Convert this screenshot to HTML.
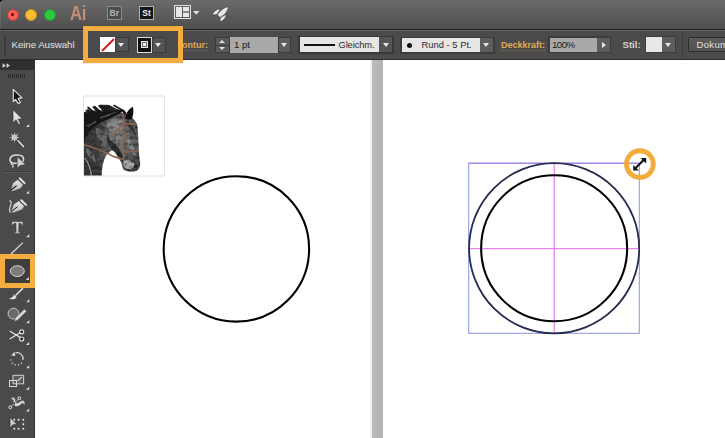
<!DOCTYPE html>
<html><head><meta charset="utf-8">
<style>
*{margin:0;padding:0;box-sizing:border-box}
html,body{width:725px;height:438px;overflow:hidden;background:#fff;font-family:"Liberation Sans",sans-serif}
.a{position:absolute}
#title{left:0;top:0;width:725px;height:30px;background:linear-gradient(#6a6a6a,#4f4f4f);border-bottom:1px solid #1e1e1e}
#ctrl{left:0;top:30px;width:725px;height:30px;background:#4b4b4b;border-top:1px solid #666;border-bottom:1.5px solid #2e2e2e}
.txt{font-size:10px;color:#dcdcdc;white-space:nowrap;line-height:12px}
.org{color:#e0a955}
.inp{background:#a9a9a9;color:#1a1a1a}
.dd{background:#5d5d5d;border:1px solid #3a3a3a}
.tri{width:0;height:0;border-left:3.5px solid transparent;border-right:3.5px solid transparent;border-top:4px solid #e8e8e8}
#tools{left:0;top:70px;width:35px;height:368px;background:#4a4a4a;border-right:1px solid #2e2e2e}
#phead{left:0;top:60px;width:35px;height:10.5px;background:#303030;border-top:1px solid #262626}
.corner{width:0;height:0;border-left:3px solid transparent;border-bottom:3px solid #e0e0e0}
</style></head><body>
<!-- title bar -->
<div id="title" class="a"></div>
<svg class="a" style="left:0;top:0" width="6" height="6"><path d="M0 0 L3 0 C1.5 0.3 0.3 1.5 0 3 Z" fill="#000"/></svg>
<div class="a" style="left:0;top:2px;width:1px;height:27px;background:rgba(255,255,255,0.08)"></div>
<div class="a" style="left:6.5px;top:8.5px;width:12px;height:12px;border-radius:50%;background:#f95e57;border:0.7px solid #b8413b"></div>
<div class="a" style="left:11px;top:13px;width:3px;height:3px;border-radius:50%;background:#5a0a06"></div>
<div class="a" style="left:25px;top:8.5px;width:12px;height:12px;border-radius:50%;background:#fbbd2f;border:0.7px solid #c8961e"></div>
<div class="a" style="left:43.5px;top:8.5px;width:12px;height:12px;border-radius:50%;background:#2ec842;border:0.7px solid #1f9a30"></div>
<div class="a" style="left:69.5px;top:1.8px;font-size:20px;line-height:22px;color:#c48e72;font-weight:bold;letter-spacing:-0.6px;transform:scaleX(0.84);transform-origin:0 0">Ai</div>
<div class="a" style="left:107px;top:6px;width:14.5px;height:14px;border:1px solid #8a8a8a;background:#4c4c4c;color:#b4b4b4;font-size:8.5px;line-height:12px;text-align:center;font-weight:bold">Br</div>
<div class="a" style="left:139px;top:6px;width:15px;height:14px;border:1px solid #b0b0b0;background:#151515;color:#f0f0f0;font-size:8.5px;line-height:12px;text-align:center;font-weight:bold">St</div>
<svg class="a" style="left:172px;top:4px" width="30" height="17">
  <rect x="2.5" y="1.5" width="16" height="13" fill="none" stroke="#e0e0e0" stroke-width="1"/>
  <rect x="4" y="3" width="6" height="10" fill="#e8e8e8"/>
  <rect x="11" y="3" width="6" height="4.3" fill="#e8e8e8"/>
  <rect x="11" y="8.7" width="6" height="4.3" fill="#e8e8e8"/>
  <path d="M21 7 L27.5 7 L24.25 10.8 Z" fill="#e0e0e0"/>
</svg>
<svg class="a" style="left:0;top:0" width="240" height="28">
  <path d="M228.6 6.8 C224.5 7.2 220 10.4 217.3 14.8 L220.1 17.6 C224.2 15.4 227.6 11.6 228.6 6.8 Z" fill="#e6e6e6" stroke="#2a2a2a" stroke-width="0.5"/>
  <path d="M212.4 14.8 C213.2 11.8 215.8 9.4 219.9 8.7 C219.4 11.4 217.8 13.6 216.3 14.6 C215 15 213.6 15 212.4 14.8 Z" fill="#e6e6e6" stroke="#2a2a2a" stroke-width="0.5"/>
  <path d="M220 21.7 C219.8 19.8 220.2 18.2 221 17.4 C222.4 16.2 224.4 15.1 226.3 14.8 C225.9 17.8 223.6 20.6 220 21.7 Z" fill="#e6e6e6" stroke="#2a2a2a" stroke-width="0.5"/>
</svg>

<!-- control bar -->
<div id="ctrl" class="a"></div>
<div class="a" style="left:4px;top:35px;width:2px;height:21px;background:repeating-linear-gradient(#2e2e2e 0 1px,transparent 1px 2px)"></div>
<div class="a txt" style="left:11.5px;top:38.5px;font-size:9.8px;letter-spacing:-0.1px;color:#e2e2e2">Keine Auswahl</div>

<div class="a txt org" style="left:175.5px;top:40.3px;border-bottom:1px dotted #7d6a50;line-height:10px;font-size:9px;font-weight:bold">Kontur:</div>
<!-- highlight box -->
<div class="a" style="left:83px;top:26px;width:100px;height:37px;background:#4a4a4a"></div>
<div class="a" style="left:82.5px;top:26px;width:100.3px;height:37.2px;border:5.3px solid #f4ad3e;z-index:3;box-shadow:0 0 0.8px rgba(0,0,0,0.5)"></div>
<div class="a" style="left:100px;top:36.5px;width:15px;height:15.5px;background:#fff;overflow:hidden">
  <svg width="16" height="16"><line x1="2" y1="14" x2="14" y2="2" stroke="#d81818" stroke-width="2"/></svg>
</div>
<div class="a dd" style="left:115px;top:36.5px;width:13.6px;height:15.5px;background:#535353"></div>
<div class="a tri" style="left:118.3px;top:43px"></div>
<div class="a" style="left:137px;top:37px;width:15px;height:15.5px;background:#111;border:1px solid #ddd"></div>
<div class="a" style="left:141px;top:41px;width:7px;height:7px;border:1px solid #e8e8e8;background:#666"></div>
<div class="a" style="left:143px;top:43px;width:3px;height:3px;background:#f0f0f0"></div>
<div class="a dd" style="left:152px;top:37px;width:13.5px;height:15.5px;background:#535353"></div>
<div class="a tri" style="left:155.3px;top:43px"></div>

<div class="a" style="left:215px;top:37px;width:14.5px;height:15.5px;background:#5a5a5a;border:1px solid #3a3a3a"></div>
<div class="a" style="left:216px;top:44.5px;width:12.5px;height:1px;background:#3a3a3a"></div>
<div class="a" style="left:219px;top:39.5px;width:0;height:0;border-left:3px solid transparent;border-right:3px solid transparent;border-bottom:3.5px solid #e0e0e0"></div>
<div class="a" style="left:219px;top:47px;width:0;height:0;border-left:3px solid transparent;border-right:3px solid transparent;border-top:3.5px solid #e0e0e0"></div>
<div class="a inp txt" style="left:229.5px;top:37px;width:48px;height:15.5px;padding:2.2px 0 0 4.5px;font-size:9.6px">1 pt</div>
<div class="a dd" style="left:277.5px;top:37px;width:13px;height:15.5px"></div>
<div class="a tri" style="left:280.5px;top:43px"></div>

<div class="a" style="left:297.5px;top:36px;width:96.5px;height:17.5px;background:#383838"></div>
<div class="a" style="left:299.5px;top:37.3px;width:79.7px;height:14.7px;background:#e6e6e6"></div>
<div class="a" style="left:304px;top:43.5px;width:31px;height:2px;background:#111"></div>
<div class="a txt" style="left:338.5px;top:38.5px;color:#2a2a2a;font-size:9.3px;letter-spacing:-0.1px">Gleichm.</div>
<div class="a" style="left:379.2px;top:37.3px;width:13.2px;height:14.7px;background:#555"></div>
<div class="a tri" style="left:382.5px;top:43px"></div>

<div class="a" style="left:399.5px;top:36.5px;width:95px;height:17px;background:#3c3c3c"></div>
<div class="a" style="left:401.5px;top:38px;width:78px;height:14px;background:#e6e6e6"></div>
<div class="a" style="left:406.5px;top:42.5px;width:5px;height:5px;border-radius:50%;background:#111"></div>
<div class="a txt" style="left:421.5px;top:38.5px;color:#2a2a2a;font-size:9.3px;letter-spacing:0.05px">Rund - 5 Pt.</div>
<div class="a" style="left:479.5px;top:38px;width:13.5px;height:14px;background:#5d5d5d"></div>
<div class="a tri" style="left:482.5px;top:43px"></div>

<div class="a txt org" style="left:501px;top:40.2px;border-bottom:1px dotted #7d6a50;line-height:10px;font-size:9px;font-weight:bold">Deckkraft:</div>
<div class="a" style="left:548px;top:36px;width:63px;height:17px;background:#3c3c3c"></div>
<div class="a inp txt" style="left:549.5px;top:37.5px;width:47px;height:14.5px;padding:1px 0 0 2.5px;font-size:9.8px;letter-spacing:-0.6px">100%</div>
<div class="a" style="left:596.5px;top:37.5px;width:13.5px;height:14.5px;background:#5d5d5d"></div>
<div class="a" style="left:601.5px;top:41.5px;width:0;height:0;border-top:3.5px solid transparent;border-bottom:3.5px solid transparent;border-left:4px solid #e8e8e8"></div>

<div class="a txt" style="left:622.5px;top:39.3px;font-weight:bold;font-size:9.6px;color:#d4d4d4">Stil:</div>
<div class="a" style="left:645px;top:36px;width:31px;height:17px;background:#3c3c3c"></div>
<div class="a" style="left:646px;top:37px;width:15.5px;height:15px;background:#e8e8e8"></div>
<div class="a" style="left:661.5px;top:37px;width:13.5px;height:15px;background:#5d5d5d"></div>
<div class="a tri" style="left:664.5px;top:43px"></div>
<div class="a" style="left:681.5px;top:31px;width:1px;height:27px;background:#3a3a3a"></div>
<div class="a" style="left:688px;top:37px;width:50px;height:14.5px;background:linear-gradient(#5c5c5c,#525252);border:1px solid #2c2c2c;border-radius:1.5px"></div>
<div class="a txt" style="left:696.5px;top:39px;font-size:9.6px;letter-spacing:0.3px;color:#e0e0e0">Dokum</div>

<!-- canvas -->
<div class="a" style="left:35px;top:60px;width:690px;height:378px;background:#fff"></div>
<div class="a" style="left:369.5px;top:60px;width:2.5px;height:378px;background:#f3f3f3"></div>
<div class="a" style="left:372px;top:60px;width:11px;height:378px;background:linear-gradient(90deg,#bcbcbc,#b2b2b2)"></div>

<!-- canvas art -->
<svg class="a" style="left:0;top:0" width="725" height="438">
  <rect x="83.5" y="96" width="81" height="80" fill="#fff" stroke="#e2e2e2" stroke-width="1"/>
  <defs>
    <radialGradient id="hg" cx="0.62" cy="0.42" r="0.7"><stop offset="0" stop-color="#828282"/><stop offset="0.5" stop-color="#5a5a5a"/><stop offset="1" stop-color="#363636"/></radialGradient>
    <clipPath id="hc"><rect x="84" y="96.5" width="80" height="79"/></clipPath>
    <filter id="tex" x="0" y="0" width="1" height="1">
      <feTurbulence type="fractalNoise" baseFrequency="0.3" numOctaves="2" seed="11" result="n"/>
      <feColorMatrix in="n" type="matrix" values="0 0 0 0 0  0 0 0 0 0  0 0 0 0 0  2.0 0 0 0 -0.8" result="na"/>
      <feComposite in="na" in2="SourceGraphic" operator="in" result="m"/>
      <feFlood flood-color="#1a1a1a"/>
      <feComposite in2="m" operator="in" result="dk"/>
      <feMerge><feMergeNode in="SourceGraphic"/><feMergeNode in="dk"/></feMerge>
    </filter>
  </defs>
  <g clip-path="url(#hc)">
    <g filter="url(#tex)">
    <!-- head + neck silhouette -->
    <path d="M84 112 C92 110 104 110 114 111 C120 112 126 114 131 117 C134 119 136.6 122 137.4 126 C138.2 134 138.6 150 139.6 160 C140.6 164 140.4 168 137 170.6 C133 172.4 127 171.6 123.6 169.4 C121.8 166 121.8 162.4 120.2 160.4 C117 156 115 152 113 150 C108 152 105.5 156 104 160 C102.4 165 101.8 170 101.6 176 L84 176 Z" fill="url(#hg)"/>
    <!-- darker neck shade -->
    <path d="M84 122 C92 120 100 122 106 128 C104 136 101 144 99 152 C97 160 96 168 95 176 L84 176 Z" fill="#3c3c3c" opacity="0.75"/>
    <path d="M107 138 C113 142 118 146 121 152 C123 156 124 160 124 164 C120 158 116 152 112 150 C109 146 107 142 107 138 Z" fill="#262626" opacity="0.85"/>
    <path d="M126 120 C131 123 135 128 136 136 C133 133 129 128 126.5 124 Z" fill="#2e2e2e" opacity="0.8"/>
    <!-- light mottled patches -->
    <path d="M108 121 C114 118 120 118 123.5 122 C123 130 119 134 112 134 C108 131 106 126 108 121 Z" fill="#a2a2a2" opacity="0.6"/>
    <path d="M96 128 C102 128 106 134 104 142 C99 141 95 135 96 128 Z" fill="#8a8a8a" opacity="0.5"/>
    <path d="M127 138 C131 140 135 146 136 156 C132 154 128 148 127 138 Z" fill="#a0a0a0" opacity="0.55"/>
    <path d="M86 148 C91 150 95 154 96 162 C92 160 88 156 86 152 Z" fill="#909090" opacity="0.6"/>
    <path d="M123 161 C128 159 133 161 135 165 C133 170 127 170 124 167 Z" fill="#bdbdbd" opacity="0.8"/>
    </g>
    <path d="M84.5 158 C88 162 90.5 168 91.5 176" stroke="#d8d8d8" stroke-width="1" fill="none" opacity="0.8"/>
    <circle cx="135.6" cy="166.2" r="1.6" fill="#1c1c1c"/>
    <circle cx="136.2" cy="127.4" r="1" fill="#111"/>
    <!-- mane -->
    <filter id="bl"><feGaussianBlur stdDeviation="0.5"/></filter>
    <g filter="url(#bl)">
    <path d="M84 114 L90 111 L100 112 L110 111 L118 109.5 L124 110.4 C119 114 111 118 104 121 C98 124 92 128 88 133 C86 136 85 140 84 142 Z" fill="#161616"/>
    <path d="M90.0 122.0 Q86.5 117.6 80.0 111.1" stroke="#151515" stroke-width="1.50" stroke-linecap="round" fill="none"/>
    <path d="M92.6 121.2 Q88.4 116.8 81.2 110.5" stroke="#151515" stroke-width="1.25" stroke-linecap="round" fill="none"/>
    <path d="M95.2 120.3 Q92.2 116.3 86.2 110.3" stroke="#151515" stroke-width="1.41" stroke-linecap="round" fill="none"/>
    <path d="M97.8 119.5 Q94.4 115.7 87.9 109.9" stroke="#151515" stroke-width="1.58" stroke-linecap="round" fill="none"/>
    <path d="M100.5 118.6 Q95.8 114.1 88.1 107.5" stroke="#151515" stroke-width="1.71" stroke-linecap="round" fill="none"/>
    <path d="M103.1 117.8 Q99.8 113.5 93.5 107.2" stroke="#151515" stroke-width="1.89" stroke-linecap="round" fill="none"/>
    <path d="M105.7 116.9 Q101.6 112.8 94.6 106.6" stroke="#151515" stroke-width="1.74" stroke-linecap="round" fill="none"/>
    <path d="M108.3 116.1 Q105.2 112.0 99.1 105.9" stroke="#151515" stroke-width="1.67" stroke-linecap="round" fill="none"/>
    <path d="M110.9 115.2 Q107.3 111.4 100.7 105.5" stroke="#151515" stroke-width="1.89" stroke-linecap="round" fill="none"/>
    <path d="M113.5 114.4 Q109.6 110.9 102.6 105.5" stroke="#151515" stroke-width="1.90" stroke-linecap="round" fill="none"/>
    <path d="M116.2 113.5 Q111.7 110.5 104.3 105.5" stroke="#151515" stroke-width="1.52" stroke-linecap="round" fill="none"/>
    <path d="M118.8 112.7 Q114.2 110.1 106.6 105.5" stroke="#151515" stroke-width="1.95" stroke-linecap="round" fill="none"/>
    <path d="M121.4 111.8 Q116.6 109.7 108.9 105.5" stroke="#151515" stroke-width="1.31" stroke-linecap="round" fill="none"/>
    <path d="M124.0 111.0 Q120.6 109.2 114.1 105.5" stroke="#151515" stroke-width="1.55" stroke-linecap="round" fill="none"/>
    <path d="M86.0 134.0 Q83.1 129.0 78.1 122.0" stroke="#1a1a1a" stroke-width="1.8" stroke-linecap="round" fill="none"/>
    <path d="M88.4 132.0 Q85.9 127.0 81.5 120.0" stroke="#1a1a1a" stroke-width="1.8" stroke-linecap="round" fill="none"/>
    <path d="M90.8 130.0 Q88.0 125.0 83.3 118.0" stroke="#1a1a1a" stroke-width="1.8" stroke-linecap="round" fill="none"/>
    <path d="M93.2 128.0 Q90.6 123.0 86.0 116.0" stroke="#1a1a1a" stroke-width="1.8" stroke-linecap="round" fill="none"/>
    <path d="M95.6 126.0 Q93.1 121.0 88.5 114.0" stroke="#1a1a1a" stroke-width="1.8" stroke-linecap="round" fill="none"/>
    <path d="M98.0 124.0 Q95.1 119.0 90.2 112.0" stroke="#1a1a1a" stroke-width="1.8" stroke-linecap="round" fill="none"/>
    <g stroke="#8a8a8a" stroke-width="0.6" fill="none" opacity="0.8">
      <path d="M88 127 L96 121"/>
      <path d="M100 118 L110 114.6"/>
      <path d="M106 116 L116 112"/>
    </g>
    </g>
    <g stroke="#6a6a6a" stroke-width="0.7" fill="none">
      <path d="M86 126 L96 122"/>
      <path d="M100 118 L110 114.6"/>
    </g>
    <!-- forelock + ear -->
    <path d="M119 108.6 C122 108.8 125 110.4 126.6 113 L124.6 116 C123.4 113 121.4 110.6 119 108.6 Z" fill="#1a1a1a"/>
    <path d="M125.2 119 C125.4 114 128.4 109 132.8 106.8 C133.8 110.4 133.6 115 131.6 119.6 Z" fill="#0e0e0e"/>
    <!-- bridle -->
    <g stroke="#8a6450" stroke-width="1.7" fill="none">
      <path d="M123.6 114.4 C123.6 128 123.6 146 123.4 159.6"/>
      <path d="M123.4 123.9 C127 123.9 131 123.9 135.3 123.9"/>
      <path d="M111.5 136 L123.4 123.9"/>
      <path d="M124.2 152.6 C129 151.4 134 150.8 139 151"/>
      <path d="M84 144.7 C96 148 106 152.4 113 156.2 L123.4 159.6"/>
    </g>
  </g>
  </g>
  </g>
  <circle cx="236.4" cy="248.9" r="72.7" fill="none" stroke="#000" stroke-width="2.1"/>
  <rect x="468.7" y="163.2" width="170.6" height="170.1" fill="none" stroke="#8597e0" stroke-width="1"/>
  <line x1="468.7" y1="163.2" x2="639.3" y2="163.2" stroke="#a878e4" stroke-width="1"/>
  <line x1="469" y1="248.7" x2="639" y2="248.7" stroke="#e466e6" stroke-width="1"/>
  <line x1="554.2" y1="163.2" x2="554.2" y2="333.3" stroke="#e066e6" stroke-width="1"/>
  <circle cx="554.15" cy="248.25" r="73" fill="none" stroke="#000" stroke-width="2.1"/>
  <circle cx="554.15" cy="248.25" r="85.05" fill="none" stroke="#1a1f3e" stroke-width="1.75"/>
  <circle cx="554.15" cy="248.25" r="85.05" fill="none" stroke="#6a80d0" stroke-width="0.5" opacity="0.4"/>
  <circle cx="639.9" cy="164.1" r="13.4" fill="none" stroke="#f4ab3c" stroke-width="4.9"/>
  <line x1="635.4" y1="168.2" x2="643.9" y2="159.7" stroke="#111" stroke-width="2"/>
  <path d="M633.2 165 L633.2 170.6 L638.8 170.6 Z" fill="#111"/>
  <path d="M640.6 157.9 L646.2 157.9 L646.2 163.5 Z" fill="#111"/>
</svg>
<!-- tools -->
<div id="phead" class="a"></div>
<svg class="a" style="left:0;top:60px" width="14" height="11"><path d="M2.6 3.2 L5.8 5.6 L2.6 8 Z M6.6 3.2 L9.8 5.6 L6.6 8 Z" fill="#d8d8d8"/></svg>
<div id="tools" class="a"></div>
<div class="a" style="left:8px;top:74px;width:17px;height:3.5px;background:repeating-linear-gradient(90deg,#2a2a2a 0 1px,transparent 1px 2px)"></div>

<!-- ellipse highlight -->
<div class="a" style="left:0;top:254px;width:35px;height:34px;border:5px solid #f4ad3e;background:#3e3e3e"></div>
<svg class="a" style="left:0;top:0" width="36" height="438">
  <defs>
    <linearGradient id="lg" x1="0" y1="0" x2="0" y2="1"><stop offset="0" stop-color="#e4e4e4"/><stop offset="1" stop-color="#b8b8b8"/></linearGradient>
    <linearGradient id="lg2" x1="0" y1="0" x2="1" y2="1"><stop offset="0" stop-color="#f0f0f0"/><stop offset="1" stop-color="#c4c4c4"/></linearGradient>
  </defs>
  <!-- separator -->
  <line x1="3" y1="171.5" x2="32" y2="171.5" stroke="#3c3c3c" stroke-width="1"/>
  <line x1="3" y1="172.5" x2="32" y2="172.5" stroke="#585858" stroke-width="1"/>
  <!-- selection -->
  <path d="M13.3 89.3 L13.3 101.6 L15.6 99.4 L18.3 103.6 L20.4 102.4 L18.2 98.4 L22 97.9 Z" fill="#151515" stroke="#e6e6e6" stroke-width="1.1" stroke-linejoin="round"/>
  <!-- direct selection -->
  <path d="M13.1 110.1 L13.1 122.4 L16.1 119.8 L18.6 124.6 L20.5 123.7 L18.1 119.1 L22.4 118.9 Z" fill="url(#lg2)" stroke="#222" stroke-width="0.45"/>
  <!-- magic wand -->
  <path d="M14.50 131.50 L15.49 135.00 L18.67 133.23 L16.90 136.41 L20.40 137.40 L16.90 138.39 L18.67 141.57 L15.49 139.80 L14.50 143.30 L13.51 139.80 L10.33 141.57 L12.10 138.39 L8.60 137.40 L12.10 136.41 L10.33 133.23 L13.51 135.00 Z" fill="#d6d6d6" stroke="#2a2a2a" stroke-width="0.35"/><circle cx="14.5" cy="137.4" r="2.4" fill="#c8c8c8"/>
  <line x1="18" y1="140.6" x2="23.6" y2="146.6" stroke="#1e1e1e" stroke-width="2.6" stroke-linecap="round"/><line x1="18" y1="140.6" x2="23.6" y2="146.6" stroke="#dedede" stroke-width="1.6" stroke-linecap="round"/>
  <!-- lasso -->
  <path d="M17.5 163.2 C13 163.8 9.6 162.6 10 159.3 C10.4 156 14 154.8 17.5 154.9 C21.5 155 24 156.5 23.6 159.6 C23.4 161 22.5 162 21.5 162.5" fill="none" stroke="#dcdcdc" stroke-width="1.5"/>
  <path d="M12 162.6 C10.5 163.4 11 164.5 12.6 164.8 C13.8 165.3 13.2 166.5 12.4 167.6" fill="none" stroke="#dcdcdc" stroke-width="1.2"/>
  <path d="M17.2 156.6 L17.2 168.6 L19.8 165.8 L25.6 164.4 Z" fill="#cdcdcd" stroke="#1e1e1e" stroke-width="0.5"/>
  <!-- pen -->
  <path d="M10.3 190.6 L13.1 182.8 L17.8 179.4 L23.2 184.8 L21 188.2 L12.6 191.6 Z" fill="url(#lg)" stroke="#2a2a2a" stroke-width="0.4"/>
  <line x1="19.8" y1="178.4" x2="24.5" y2="183.1" stroke="#e8e8e8" stroke-width="2" stroke-linecap="round"/>
  <line x1="10.8" y1="190.2" x2="16.6" y2="185.6" stroke="#1a1a1a" stroke-width="1.2"/>
  <!-- curvature pen -->
  <path d="M10.8 212 L13.6 204.2 L18.8 200.8 L24.4 206.2 L22 209.8 L13.2 213 Z" fill="url(#lg)" stroke="#2a2a2a" stroke-width="0.4"/>
  <line x1="21.2" y1="200.2" x2="26" y2="204.9" stroke="#e8e8e8" stroke-width="2" stroke-linecap="round"/>
  <line x1="11.2" y1="211.6" x2="17.6" y2="206.7" stroke="#222" stroke-width="1"/>
  <path d="M9.4 200.6 C11 201.2 11.8 202.4 10.8 205 C9.6 207.8 8.6 210.5 10.6 212.6" fill="none" stroke="#d8d8d8" stroke-width="1.2"/>
  <!-- type -->
  <path d="M11.9 221.8 L22.9 221.8 L22.9 225.2 L22.2 225.2 C21.8 223.8 21.2 223.3 20 223.3 L18.7 223.3 L18.7 231.6 C18.7 232.3 19.2 232.5 20.4 232.6 L20.4 233.4 L14.4 233.4 L14.4 232.6 C15.6 232.5 16.1 232.3 16.1 231.6 L16.1 223.3 L14.8 223.3 C13.6 223.3 13 223.8 12.6 225.2 L11.9 225.2 Z" fill="url(#lg)" stroke="#2a2a2a" stroke-width="0.3"/>
  <!-- line -->
  <line x1="11" y1="254" x2="22.9" y2="242.6" stroke="#e6e6e6" stroke-width="1.1"/>
  <!-- ellipse -->
  <ellipse cx="17.3" cy="271.1" rx="7" ry="5.4" fill="#7c7c7c" stroke="#d6d6d6" stroke-width="1"/>
  <!-- brush -->
  <line x1="16" y1="295" x2="22.5" y2="288.6" stroke="#dcdcdc" stroke-width="1.6" stroke-linecap="round"/>
  <path d="M9 298.2 C11.5 298.6 13.6 296.2 13.8 294.6 L16.6 297 C15.5 299.5 12.5 300.2 9 298.2 Z" fill="#e0e0e0"/>
  <!-- blob brush -->
  <circle cx="13.5" cy="313.6" r="5.4" fill="#6a6a6a" stroke="#d4d4d4" stroke-width="0.9"/>
  <path d="M14.3 321.4 L15.4 318 L24.4 309 L26.6 311.2 L17.6 320.2 Z" fill="#d8d8d8" stroke="#2a2a2a" stroke-width="0.4"/>
  <!-- scissors -->
  <line x1="10" y1="331.3" x2="20.2" y2="337.4" stroke="#e0e0e0" stroke-width="1.3" stroke-linecap="round"/>
  <line x1="10" y1="338.7" x2="20.2" y2="332.8" stroke="#e0e0e0" stroke-width="1.3" stroke-linecap="round"/>
  <circle cx="21.7" cy="331.8" r="2" fill="#222" stroke="#e0e0e0" stroke-width="1.2"/>
  <circle cx="21.7" cy="339" r="2" fill="#222" stroke="#e0e0e0" stroke-width="1.2"/>
  <!-- rotate -->
  <path d="M15.6 352.9 A6.1 6.1 0 0 1 23 359.8" fill="none" stroke="#dcdcdc" stroke-width="1.3"/>
  <path d="M11.2 355.6 L14.6 351.8 L15.4 356 Z" fill="#dcdcdc"/>
  <g fill="#cfcfcf"><circle cx="10.9" cy="360" r="0.8"/><circle cx="12.3" cy="363.2" r="0.8"/><circle cx="15.2" cy="364.8" r="0.8"/><circle cx="18.7" cy="364.8" r="0.8"/><circle cx="21.6" cy="363" r="0.8"/></g>
  <!-- scale -->
  <rect x="13" y="375.3" width="10.6" height="8.5" fill="#5a5a5a" stroke="#cfcfcf" stroke-width="1"/>
  <rect x="9.5" y="380.5" width="7" height="6" fill="none" stroke="#dadada" stroke-width="1"/>
  <line x1="17.6" y1="381" x2="21.8" y2="377.2" stroke="#e0e0e0" stroke-width="1.1"/>
  <!-- puppet warp -->
  <path d="M10.8 400.4 C10.6 398 12.4 396.8 13.9 397.5 C15.5 398.3 15.7 400.5 15.5 402.3 C16.7 403.5 18.5 403 20.1 401.6 C21.7 400.3 23.7 400.2 24.5 401.8 C25.1 403 24.9 404.4 24.5 405.3 C23.7 403.7 22.7 403.1 21.5 403.7 C19.7 405.9 17.5 406.9 15.5 406.3 C13.7 405.5 13.1 403.5 13.3 401.5 C13.5 399.9 12.8 398.9 11.8 399.3 C11.3 399.5 11 399.9 10.8 400.4 Z" fill="#dadada" stroke="#2a2a2a" stroke-width="0.35"/>
  <line x1="10.4" y1="407.2" x2="19.2" y2="398.4" stroke="#d8d8d8" stroke-width="0.8"/>
  <circle cx="10.3" cy="407.3" r="1.4" fill="#4a4a4a" stroke="#e8e8e8" stroke-width="1"/>
  <circle cx="19.3" cy="398.3" r="1.4" fill="#4a4a4a" stroke="#e8e8e8" stroke-width="1"/>
  <circle cx="14.3" cy="403.3" r="0.9" fill="#111"/>
  <!-- free transform -->
  <g fill="#ececec"><circle cx="14.3" cy="419.7" r="0.95"/><circle cx="18.6" cy="419.7" r="0.95"/><circle cx="23.3" cy="419.7" r="0.95"/><circle cx="23.3" cy="424.2" r="0.95"/><circle cx="14.3" cy="428.7" r="0.95"/><circle cx="18.6" cy="428.7" r="0.95"/><circle cx="23.3" cy="428.7" r="0.95"/></g>
  <path d="M10.1 417.4 L10 427.8 L12.8 424.8 L17 424.4 Z" fill="#d0d0d0" stroke="#1a1a1a" stroke-width="0.5"/>
  <!-- corner triangles -->
  <g fill="#e0e0e0">
    <path d="M29.1 124 L29.1 127 L26 127 Z"/>
    <path d="M29.1 190.8 L29.1 193.8 L26 193.8 Z"/>
    <path d="M29.3 234.3 L29.3 237.3 L26.2 237.3 Z"/>
    <path d="M28.9 277 L28.9 280 L25.8 280 Z"/>
    <path d="M29.3 299.2 L29.3 302.2 L26.2 302.2 Z"/>
    <path d="M29.3 320.3 L29.3 323.3 L26.2 323.3 Z"/>
    <path d="M29.1 341.9 L29.1 344.9 L26 344.9 Z"/>
    <path d="M29.2 365.2 L29.2 368.2 L26.1 368.2 Z"/>
    <path d="M29.1 386.8 L29.1 389.8 L26 389.8 Z"/>
    <path d="M29.1 408.4 L29.1 411.4 L26 411.4 Z"/>
  </g>
</svg>
</body></html>
